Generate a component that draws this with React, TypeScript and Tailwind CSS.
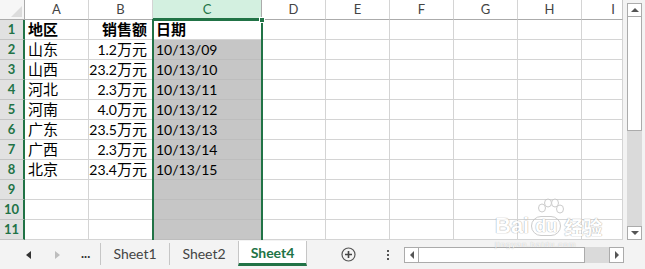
import React from "react";

const cols = [
  { l: "A", w: "w-[64px]" },
  { l: "B", w: "w-[64px]" },
  { l: "C", w: "w-[109px]" },
  { l: "D", w: "w-[64px]" },
  { l: "E", w: "w-[64px]" },
  { l: "F", w: "w-[64px]" },
  { l: "G", w: "w-[64px]" },
  { l: "H", w: "w-[64px]" },
  { l: "I", w: "w-[41px]" },
];

const data: [string, string, string][] = [
  ["地区", "销售额", "日期"],
  ["山东", "1.2万元", "10/13/09"],
  ["山西", "23.2万元", "10/13/10"],
  ["河北", "2.3万元", "10/13/11"],
  ["河南", "4.0万元", "10/13/12"],
  ["广东", "23.5万元", "10/13/13"],
  ["广西", "2.3万元", "10/13/14"],
  ["北京", "23.4万元", "10/13/15"],
  ["", "", ""],
  ["", "", ""],
  ["", "", ""],
];

function Amount({ v }: { v: string }) {
  const num = v.replace("万元", "");
  return (
    <span>
      <span className="text-[14px]">{num}</span>
      <span className="text-[15px]">万元</span>
    </span>
  );
}

function HeaderRow() {
  return (
    <div className="flex h-[20px]">
      <div className="relative w-[25px] h-[20px] bg-[#f6f6f6] border-r border-b border-[#ababab] border-b-[#ababab]">
        <div className="absolute right-[2px] bottom-[2px] w-0 h-0 border-l-[11px] border-l-transparent border-b-[11px] border-b-[#dcdcdc]" />
      </div>
      {cols.map((c) =>
        c.l === "C" ? (
          <div
            key={c.l}
            className={`${c.w} h-[20px] flex items-center justify-center bg-[#d3f0e0] border-r border-[#ababab] border-b-2 border-b-[#217346] text-[13px] text-[#217346] pt-[2px]`}
          >
            {c.l}
          </div>
        ) : c.l === "I" ? (
          <div
            key={c.l}
            className={`${c.w} h-[20px] flex items-center justify-end pr-[7px] bg-white border-r border-r-[#c8c8c8] border-b border-b-[#ababab] text-[13px] text-[#444] pt-[1px]`}
          >
            {c.l}
          </div>
        ) : (
          <div
            key={c.l}
            className={`${c.w} h-[20px] flex items-center justify-center bg-white border-r border-r-[#d4d4d4] border-b border-b-[#ababab] text-[13px] text-[#444] pt-[1px]`}
          >
            {c.l}
          </div>
        )
      )}
    </div>
  );
}

function DataRow({ i, row }: { i: number; row: [string, string, string] }) {
  const bold = i === 0;
  return (
    <div className="flex h-[20px]">
      <div className="w-[25px] h-[20px] flex items-end justify-center pb-[1px] bg-[#e1e1e1] border-r-2 border-r-[#217346] border-b border-b-[#c4c4c4] text-[13px] leading-[17px] font-bold text-[#217346]">
        {i + 1}
      </div>
      {cols.map((c, ci) => {
        const base = `${c.w} h-[20px] flex items-end pb-[1px] border-r border-b border-[#d4d4d4] leading-[17px] text-black overflow-hidden whitespace-nowrap`;
        if (ci === 0)
          return (
            <div key={c.l} className={`${base} text-[15px] pl-[3px] ${bold ? "font-bold" : ""}`}>
              {row[0]}
            </div>
          );
        if (ci === 1)
          return (
            <div key={c.l} className={`${base} text-[15px] justify-end pr-[5px] ${bold ? "font-bold" : ""}`}>
              {bold ? row[1] : row[1] ? <Amount v={row[1]} /> : null}
            </div>
          );
        if (ci === 2)
          return (
            <div
              key={c.l}
              className={`${base} pl-[3px] ${bold ? "text-[15px] font-bold bg-white" : "text-[14px] bg-[#c6c6c6] border-b-[#bdbdbd]"}`}
            >
              {row[2]}
            </div>
          );
        return <div key={c.l} className={base} />;
      })}
    </div>
  );
}

function VScroll() {
  return (
    <div className="w-[22px] h-[240px] bg-[#f3f3f3] pt-[3px] pl-[4px]">
      <div className="w-[15px] h-[237px] flex flex-col">
        <div className="h-[14px] bg-white border border-[#ababab] flex items-center justify-center">
          <div className="w-0 h-0 border-l-[4px] border-r-[4px] border-l-transparent border-r-transparent border-b-[4px] border-b-[#555]" />
        </div>
        <div className="h-[114px] bg-white border border-[#ababab] border-t-0" />
        <div className="flex-1 bg-[#dadada]" />
        <div className="h-[14px] bg-white border border-[#ababab] flex items-center justify-center">
          <div className="w-0 h-0 border-l-[4px] border-r-[4px] border-l-transparent border-r-transparent border-t-[4px] border-t-[#555]" />
        </div>
      </div>
    </div>
  );
}

function TabBar() {
  return (
    <div className="flex h-[29px] bg-[#f3f3f3] items-stretch text-[14px]">
      <div className="w-[100px] flex items-center">
        <div className="ml-[26px] w-0 h-0 border-t-[4px] border-b-[4px] border-t-transparent border-b-transparent border-r-[5px] border-r-[#333]" />
        <div className="ml-[24px] w-0 h-0 border-t-[4px] border-b-[4px] border-t-transparent border-b-transparent border-l-[5px] border-l-[#bdbdbd]" />
        <div className="ml-[21px] text-[#333] font-bold text-[13px] leading-none pb-[2px]">...</div>
      </div>
      <div className="flex items-start pt-[3px]">
        <div className="w-px h-[22px] bg-[#c6c6c6]" />
      </div>
      <div className="w-[68px] flex items-center justify-center text-[#444] pb-[2px]">Sheet1</div>
      <div className="flex items-start pt-[3px]">
        <div className="w-px h-[22px] bg-[#c6c6c6]" />
      </div>
      <div className="w-[68px] flex items-center justify-center text-[#444] pb-[2px]">Sheet2</div>
      <div className="w-[69px] h-[25px] mt-px flex items-center justify-center bg-white border-x border-[#c6c6c6] border-b-[3px] border-b-[#217346] text-[#217346] font-bold">
        Sheet4
      </div>
      <div className="ml-[34px] flex items-center">
        <svg width="15" height="15" viewBox="0 0 15 15">
          <circle cx="7.5" cy="7.5" r="6.5" fill="none" stroke="#555" strokeWidth="1.2" />
          <path d="M7.5 4v7M4 7.5h7" stroke="#444" strokeWidth="1.6" />
        </svg>
      </div>
      <div className="ml-[31px] w-[2px] flex flex-col items-center justify-center gap-[2px]">
        <div className="w-[2px] h-[2px] bg-[#555]" />
        <div className="w-[2px] h-[2px] bg-[#555]" />
        <div className="w-[2px] h-[2px] bg-[#555]" />
      </div>
      <div className="ml-[15px] flex items-center">
        <div className="w-[220px] h-[16px] flex">
          <div className="w-[15px] bg-white border border-[#ababab] flex items-center justify-center">
            <div className="w-0 h-0 border-t-[4px] border-b-[4px] border-t-transparent border-b-transparent border-r-[4px] border-r-[#555]" />
          </div>
          <div className="w-[166px] bg-white border-y border-r border-[#ababab]" />
          <div className="flex-1 bg-[#dadada]" />
          <div className="w-[15px] bg-white border border-[#ababab] flex items-center justify-center">
            <div className="w-0 h-0 border-t-[4px] border-b-[4px] border-t-transparent border-b-transparent border-l-[4px] border-l-[#555]" />
          </div>
        </div>
      </div>
    </div>
  );
}

function Watermark() {
  return (
    <div className="absolute left-[495px] top-[196px] pointer-events-none opacity-80">
      <div className="relative w-[115px] h-[52px]">
        <svg className="absolute left-[38px] top-[2px]" width="34" height="22" viewBox="0 0 34 22">
          <g fill="white" stroke="#c0c0c0" strokeWidth="1">
            <ellipse cx="9" cy="10" rx="3.5" ry="4" />
            <ellipse cx="15" cy="5" rx="3.5" ry="4" />
            <ellipse cx="22" cy="5" rx="3.5" ry="4" />
            <ellipse cx="27" cy="11" rx="3.5" ry="4" />
          </g>
        </svg>
        <div className="absolute left-0 top-[19px] flex items-center text-[22px] leading-none font-bold text-white [text-shadow:0_0_1px_#9a9a9a,0_0_1px_#9a9a9a] font-['Liberation_Sans',sans-serif]">
          <span>Bai</span>
          <span className="ml-[2px] px-[3px] rounded-[10px] border border-[#c0c0c0] text-[18px]">du</span>
          <span className="ml-[3px] text-[19px] font-['Noto_Sans_CJK_SC',sans-serif]">经验</span>
        </div>
        <div className="absolute left-0 top-[45px] text-[8px] leading-none text-white [text-shadow:0_0_1px_#9a9a9a] tracking-[1px] font-['Liberation_Sans',sans-serif]">
          jingyan.baidu.com
        </div>
      </div>
    </div>
  );
}

export default function App() {
  return (
    <div className="relative w-[645px] h-[269px] overflow-hidden bg-white font-['Lato','Noto_Sans_CJK_SC',sans-serif]">
      <div className="flex">
        <div className="relative w-[623px]">
          <HeaderRow />
          {data.map((r, i) => (
            <DataRow key={i} i={i} row={r} />
          ))}
          <div className="absolute left-[152px] top-[19px] w-[111px] h-[221px] border-l-2 border-r-2 border-t-2 border-[#217346]" />
          <div className="absolute left-[259px] top-[17px] w-[6px] h-[6px] bg-[#217346] border border-white" />
        </div>
        <VScroll />
      </div>
      <TabBar />
      <Watermark />
    </div>
  );
}
